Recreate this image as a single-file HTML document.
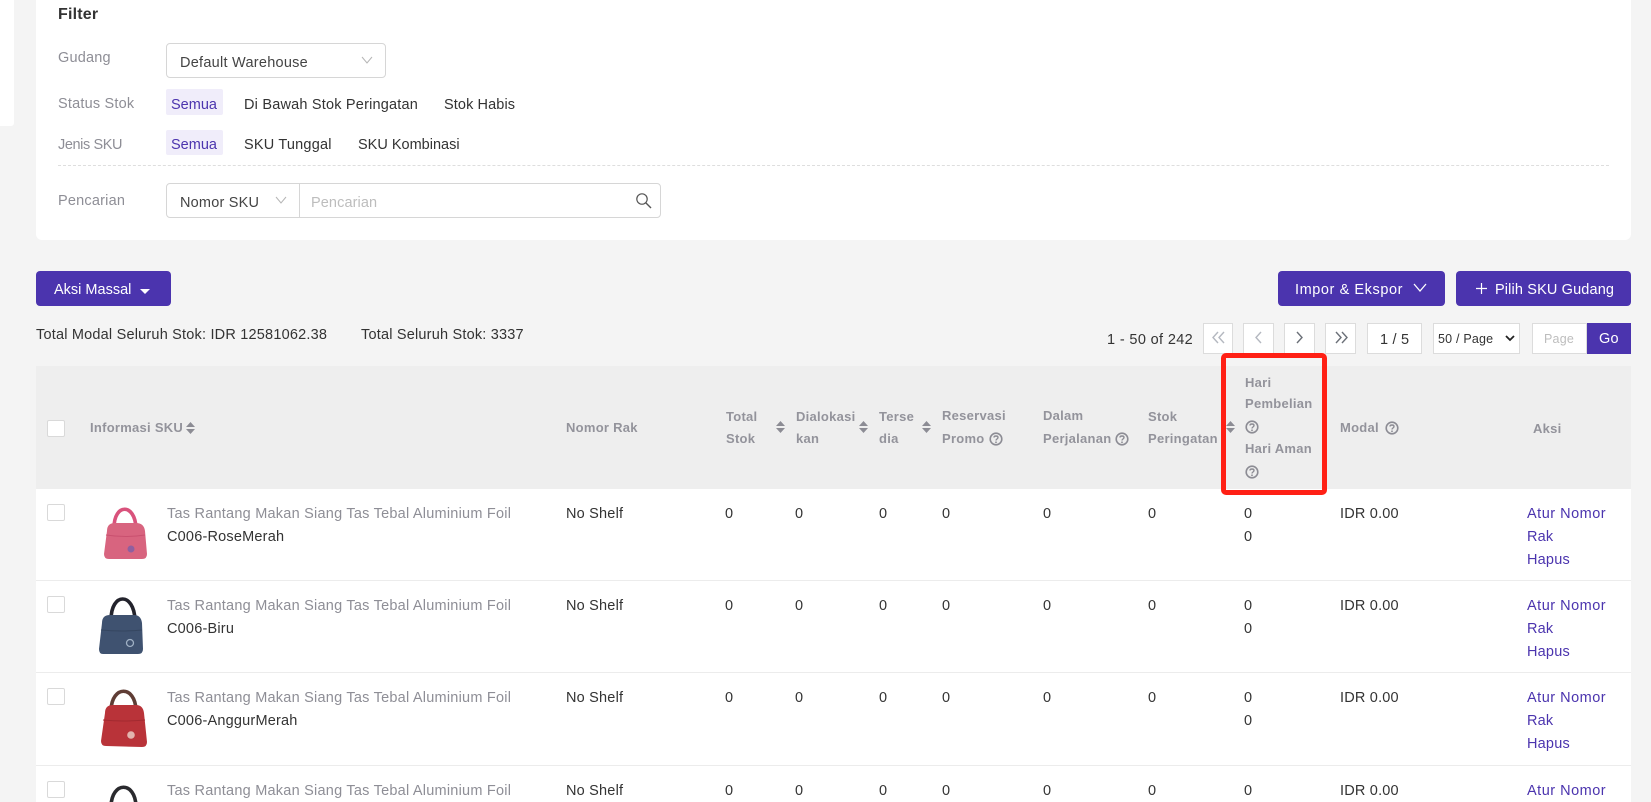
<!DOCTYPE html>
<html lang="id">
<head>
<meta charset="utf-8">
<title>Stok</title>
<style>
html,body{margin:0;padding:0;width:1651px;height:802px;overflow:hidden;background:#f4f4f4}
body{position:relative;font-family:"Liberation Sans",Arial,sans-serif;font-size:14.5px;color:#333;letter-spacing:.2px}
.a{position:absolute;box-sizing:border-box}
.t{position:absolute;white-space:nowrap;line-height:20px;height:20px;margin-top:1px}
.g{color:#8e8e96}
.h{color:#93939b;font-weight:bold;font-size:13px;letter-spacing:.27px;margin-top:0}
.s{font-size:12.500px;margin-top:0}
.p{color:#4b34ae}
.w{color:#fff}
.box{position:absolute;box-sizing:border-box;background:#fff;border:1px solid #dcdcdc}
.cb{position:absolute;box-sizing:border-box;width:18px;height:17px;background:#fff;border:1px solid #d9d9d9;border-radius:2px}
.btn{position:absolute;box-sizing:border-box;background:#4b34ae;border-radius:4px}
svg{position:absolute;display:block;overflow:visible}
</style>
</head>
<body>
<!-- sidebar -->
<div class="a" style="left:0;top:0;width:14px;height:126px;background:#fff;border-radius:0 0 3px 0"></div>
<!-- filter panel -->
<div class="a" style="left:36px;top:-10px;width:1595px;height:250px;background:#fff;border-radius:6px"></div>
<div class="t" style="left:58px;top:4px;font-size:16px;font-weight:bold;color:#333;letter-spacing:.2px">Filter</div>

<div class="t g" style="left:58px;top:47px">Gudang</div>
<div class="box" style="left:166px;top:43px;width:220px;height:35px;border-color:#d6d6d6;border-radius:4px"></div>
<div class="t" style="left:180px;top:52px;color:#444;letter-spacing:.26px">Default Warehouse</div>
<svg style="left:361px;top:56px" width="12" height="8" viewBox="0 0 12 8"><path d="M1 1l5 6 5-6" fill="none" stroke="#b5b5b5" stroke-width="1"/></svg>

<div class="t g" style="left:58px;top:93px">Status Stok</div>
<div class="a" style="left:166px;top:89px;width:57px;height:26px;background:#f0edfa;border-radius:2px"></div>
<div class="t p" style="left:171px;top:94px;letter-spacing:0">Semua</div>
<div class="t" style="left:244px;top:94px">Di Bawah Stok Peringatan</div>
<div class="t" style="left:444px;top:94px;letter-spacing:.1px">Stok Habis</div>

<div class="t g" style="left:58px;top:134px;letter-spacing:-.4px">Jenis SKU</div>
<div class="a" style="left:166px;top:130px;width:57px;height:25px;background:#f0edfa;border-radius:2px"></div>
<div class="t p" style="left:171px;top:134px;letter-spacing:0">Semua</div>
<div class="t" style="left:244px;top:134px">SKU Tunggal</div>
<div class="t" style="left:358px;top:134px;letter-spacing:0">SKU Kombinasi</div>

<div class="a" style="left:58px;top:165px;width:1551px;height:0;border-top:1px dashed #dedede"></div>

<div class="t g" style="left:58px;top:190px">Pencarian</div>
<div class="box" style="left:166px;top:183px;width:495px;height:35px;border-color:#d6d6d6;border-radius:4px"></div>
<div class="a" style="left:299px;top:183px;width:1px;height:35px;background:#d6d6d6"></div>
<div class="t" style="left:180px;top:192px;color:#444">Nomor SKU</div>
<svg style="left:275px;top:196px" width="12" height="8" viewBox="0 0 12 8"><path d="M1 1l5 6 5-6" fill="none" stroke="#b5b5b5" stroke-width="1"/></svg>
<div class="t" style="left:311px;top:192px;color:#bdbdbd;letter-spacing:.1px">Pencarian</div>
<svg style="left:635px;top:192px" width="17" height="17" viewBox="0 0 17 17"><circle cx="7" cy="7" r="5.2" fill="none" stroke="#555" stroke-width="1.2"/><path d="M11 11l5 5" stroke="#555" stroke-width="1.4"/></svg>

<!-- actions -->
<div class="btn" style="left:36px;top:271px;width:135px;height:35px"></div>
<div class="t w" style="left:54px;top:279px;letter-spacing:0">Aksi Massal</div>
<svg style="left:140px;top:289px" width="10" height="5" viewBox="0 0 10 5"><path d="M0 0h10L5 5z" fill="#fff"/></svg>

<div class="btn" style="left:1278px;top:271px;width:167px;height:35px"></div>
<div class="t w" style="left:1295px;top:279px;letter-spacing:.58px">Impor &amp; Ekspor</div>
<svg style="left:1413px;top:283px" width="14" height="10" viewBox="0 0 14 10"><path d="M1 1l6 7 6-7" fill="none" stroke="#fff" stroke-width="1.3"/></svg>
<div class="btn" style="left:1456px;top:271px;width:175px;height:35px"></div>
<svg style="left:1476px;top:283px" width="11" height="11" viewBox="0 0 11 11"><path d="M5.500 0v11M0 5.500h11" stroke="#fff" stroke-width="1.2"/></svg>
<div class="t w" style="left:1495px;top:279px;letter-spacing:.14px">Pilih SKU Gudang</div>

<div class="t" style="left:36px;top:324px">Total Modal Seluruh Stok: IDR 12581062.38</div>
<div class="t" style="left:361px;top:324px">Total Seluruh Stok: 3337</div>

<!-- pagination -->
<div class="t" style="left:1107px;top:329px;letter-spacing:.36px">1 - 50 of 242</div>
<div class="box" style="left:1203px;top:323px;width:30px;height:31px"></div>
<svg style="left:1211px;top:331px" width="15" height="13" viewBox="0 0 15 13"><path d="M7 1L2 6.500 7 12M13 1L8 6.500 13 12" fill="none" stroke="#b4b8c0" stroke-width="1.4"/></svg>
<div class="box" style="left:1243px;top:323px;width:31px;height:31px"></div>
<svg style="left:1254px;top:331px" width="9" height="13" viewBox="0 0 9 13"><path d="M7 1L2 6.500 7 12" fill="none" stroke="#b4b8c0" stroke-width="1.4"/></svg>
<div class="box" style="left:1284px;top:323px;width:31px;height:31px"></div>
<svg style="left:1295px;top:331px" width="9" height="13" viewBox="0 0 9 13"><path d="M2 1l5 5.500L2 12" fill="none" stroke="#6b7078" stroke-width="1.4"/></svg>
<div class="box" style="left:1325px;top:323px;width:31px;height:31px"></div>
<svg style="left:1334px;top:331px" width="15" height="13" viewBox="0 0 15 13"><path d="M2 1l5 5.500L2 12M8 1l5 5.500L8 12" fill="none" stroke="#6b7078" stroke-width="1.4"/></svg>
<div class="box" style="left:1367px;top:323px;width:55px;height:31px"></div>
<div class="t" style="left:1380px;top:329px">1 / 5</div>
<div class="box" style="left:1433px;top:323px;width:87px;height:31px"></div>
<div class="t s" style="left:1438px;top:329px;letter-spacing:.2px">50 / Page</div>
<svg style="left:1505px;top:335px" width="10" height="7" viewBox="0 0 10 7"><path d="M1 1l4 4 4-4" fill="none" stroke="#222" stroke-width="1.800"/></svg>
<div class="box" style="left:1532px;top:323px;width:55px;height:31px"></div>
<div class="t s" style="left:1544px;top:329px;letter-spacing:.2px;color:#bdbdbd">Page</div>
<div class="a" style="left:1587px;top:323px;width:44px;height:31px;background:#4b34ae"></div>
<div class="t w" style="left:1599px;top:328px">Go</div>

<!-- table -->
<div class="a" style="left:36px;top:366px;width:1595px;height:123px;background:#eee"></div>
<div class="a" style="left:36px;top:489px;width:1595px;height:313px;background:#fff"></div>
<div class="a" style="left:36px;top:580px;width:1595px;height:1px;background:#ececec"></div>
<div class="a" style="left:36px;top:672px;width:1595px;height:1px;background:#ececec"></div>
<div class="a" style="left:36px;top:765px;width:1595px;height:1px;background:#ececec"></div>

<div class="cb" style="left:47px;top:420px"></div>
<div class="t h" style="left:90px;top:418px">Informasi SKU</div>
<svg style="left:186px;top:422px" width="9" height="12" viewBox="0 0 9 12"><path d="M4.500 0L9 5H0zM0 7h9l-4.500 5z" fill="#8c8c94"/></svg>
<div class="t h" style="left:566px;top:418px">Nomor Rak</div>
<div class="t h" style="left:726px;top:407px">Total</div>
<div class="t h" style="left:726px;top:429px">Stok</div>
<svg style="left:776px;top:421px" width="9" height="12" viewBox="0 0 9 12"><path d="M4.500 0L9 5H0zM0 7h9l-4.500 5z" fill="#8c8c94"/></svg>
<div class="t h" style="left:796px;top:407px">Dialokasi</div>
<div class="t h" style="left:796px;top:429px">kan</div>
<svg style="left:859px;top:421px" width="9" height="12" viewBox="0 0 9 12"><path d="M4.500 0L9 5H0zM0 7h9l-4.500 5z" fill="#8c8c94"/></svg>
<div class="t h" style="left:879px;top:407px">Terse</div>
<div class="t h" style="left:879px;top:429px">dia</div>
<svg style="left:922px;top:421px" width="9" height="12" viewBox="0 0 9 12"><path d="M4.500 0L9 5H0zM0 7h9l-4.500 5z" fill="#8c8c94"/></svg>
<div class="t h" style="left:942px;top:406px">Reservasi</div>
<div class="t h" style="left:942px;top:429px">Promo</div>
<svg style="left:989px;top:432px" width="14" height="14" viewBox="0 0 14 14"><circle cx="7" cy="7" r="5.800" fill="none" stroke="#8c8c94" stroke-width="1.600"/><path d="M5 5.500C5 3.500 9 3.500 9 5.500 9 7 7 7 7 8.500" fill="none" stroke="#8c8c94" stroke-width="1.400"/><circle cx="7" cy="10.300" r=".9" fill="#8c8c94"/></svg>
<div class="t h" style="left:1043px;top:406px">Dalam</div>
<div class="t h" style="left:1043px;top:429px">Perjalanan</div>
<svg style="left:1115px;top:432px" width="14" height="14" viewBox="0 0 14 14"><circle cx="7" cy="7" r="5.800" fill="none" stroke="#8c8c94" stroke-width="1.600"/><path d="M5 5.500C5 3.500 9 3.500 9 5.500 9 7 7 7 7 8.500" fill="none" stroke="#8c8c94" stroke-width="1.400"/><circle cx="7" cy="10.300" r=".9" fill="#8c8c94"/></svg>
<div class="t h" style="left:1148px;top:407px">Stok</div>
<div class="t h" style="left:1148px;top:429px">Peringatan</div>
<svg style="left:1226px;top:421px" width="9" height="12" viewBox="0 0 9 12"><path d="M4.500 0L9 5H0zM0 7h9l-4.500 5z" fill="#8c8c94"/></svg>
<div class="t h" style="left:1245px;top:373px">Hari</div>
<div class="t h" style="left:1245px;top:394px">Pembelian</div>
<svg style="left:1245px;top:420px" width="14" height="14" viewBox="0 0 14 14"><circle cx="7" cy="7" r="5.800" fill="none" stroke="#8c8c94" stroke-width="1.600"/><path d="M5 5.500C5 3.500 9 3.500 9 5.500 9 7 7 7 7 8.500" fill="none" stroke="#8c8c94" stroke-width="1.400"/><circle cx="7" cy="10.300" r=".9" fill="#8c8c94"/></svg>
<div class="t h" style="left:1245px;top:439px">Hari Aman</div>
<svg style="left:1245px;top:465px" width="14" height="14" viewBox="0 0 14 14"><circle cx="7" cy="7" r="5.800" fill="none" stroke="#8c8c94" stroke-width="1.600"/><path d="M5 5.500C5 3.500 9 3.500 9 5.500 9 7 7 7 7 8.500" fill="none" stroke="#8c8c94" stroke-width="1.400"/><circle cx="7" cy="10.300" r=".9" fill="#8c8c94"/></svg>
<div class="t h" style="left:1340px;top:418px">Modal</div>
<svg style="left:1385px;top:421px" width="14" height="14" viewBox="0 0 14 14"><circle cx="7" cy="7" r="5.800" fill="none" stroke="#8c8c94" stroke-width="1.600"/><path d="M5 5.500C5 3.500 9 3.500 9 5.500 9 7 7 7 7 8.500" fill="none" stroke="#8c8c94" stroke-width="1.400"/><circle cx="7" cy="10.300" r=".9" fill="#8c8c94"/></svg>
<div class="t h" style="left:1533px;top:419px">Aksi</div>

<!-- red annotation -->
<div class="a" style="left:1221px;top:353px;width:106px;height:142px;border:5.500px solid #ff2015;border-radius:5px"></div>

<!-- row 1 -->
<div class="cb" style="left:47px;top:504px"></div>
<svg style="left:100px;top:504px" width="50" height="58" viewBox="0 0 50 58"><path d="M14 24C14 -1 35 -1 36 24" fill="none" stroke="#d9527c" stroke-width="3.600"/><path d="M7 27Q7 19 15 19H36Q44 19 45 27L47 50Q47 55 42 55H9Q4 55 4 50z" fill="#d8647f"/><path d="M6 31Q26 34 45 31" fill="none" stroke="#c9506f" stroke-width="1"/><circle cx="31" cy="45" r="3.500" fill="#8f5f9f"/></svg>
<div class="t g" style="left:167px;top:503px;letter-spacing:.23px">Tas Rantang Makan Siang Tas Tebal Aluminium Foil</div>
<div class="t" style="left:167px;top:526px">C006-RoseMerah</div>
<div class="t" style="left:566px;top:503px">No Shelf</div>
<div class="t" style="left:725px;top:503px">0</div>
<div class="t" style="left:795px;top:503px">0</div>
<div class="t" style="left:879px;top:503px">0</div>
<div class="t" style="left:942px;top:503px">0</div>
<div class="t" style="left:1043px;top:503px">0</div>
<div class="t" style="left:1148px;top:503px">0</div>
<div class="t" style="left:1244px;top:503px">0</div>
<div class="t" style="left:1244px;top:526px">0</div>
<div class="t" style="left:1340px;top:503px">IDR 0.00</div>
<div class="t p" style="left:1527px;top:503px;letter-spacing:.5px">Atur Nomor</div>
<div class="t p" style="left:1527px;top:526px">Rak</div>
<div class="t p" style="left:1527px;top:549px">Hapus</div>

<!-- row 2 -->
<div class="cb" style="left:47px;top:596px"></div>
<svg style="left:96px;top:594px" width="50" height="62" viewBox="0 0 50 62"><path d="M15 26C15 -2 38 -2 39 26" fill="none" stroke="#23232c" stroke-width="3.600"/><path d="M6 29Q6 21 14 21H38Q45 21 46 29L47 55Q47 60 42 60H7Q3 60 3 55z" fill="#3f5270"/><path d="M5 36Q26 38 46 36" fill="none" stroke="#354660" stroke-width="1"/><circle cx="34" cy="49" r="3.500" fill="none" stroke="#9fb0c4" stroke-width="1.300"/></svg>
<div class="t g" style="left:167px;top:595px;letter-spacing:.23px">Tas Rantang Makan Siang Tas Tebal Aluminium Foil</div>
<div class="t" style="left:167px;top:618px">C006-Biru</div>
<div class="t" style="left:566px;top:595px">No Shelf</div>
<div class="t" style="left:725px;top:595px">0</div>
<div class="t" style="left:795px;top:595px">0</div>
<div class="t" style="left:879px;top:595px">0</div>
<div class="t" style="left:942px;top:595px">0</div>
<div class="t" style="left:1043px;top:595px">0</div>
<div class="t" style="left:1148px;top:595px">0</div>
<div class="t" style="left:1244px;top:595px">0</div>
<div class="t" style="left:1244px;top:618px">0</div>
<div class="t" style="left:1340px;top:595px">IDR 0.00</div>
<div class="t p" style="left:1527px;top:595px;letter-spacing:.5px">Atur Nomor</div>
<div class="t p" style="left:1527px;top:618px">Rak</div>
<div class="t p" style="left:1527px;top:641px">Hapus</div>

<!-- row 3 -->
<div class="cb" style="left:47px;top:688px"></div>
<svg style="left:98px;top:686px" width="50" height="64" viewBox="0 0 50 64"><path d="M13 24C14 -1 37 -1 38 24" fill="none" stroke="#5f3d35" stroke-width="3.600"/><path d="M7 27Q7 19 15 19H38Q45 19 46 27L49 56Q49 61 44 61L8 60Q3 60 3 55z" fill="#b93339"/><path d="M5 34Q26 36 47 34" fill="none" stroke="#a22a30" stroke-width="1"/><circle cx="33" cy="49" r="3.800" fill="#e2b4ae"/></svg>
<div class="t g" style="left:167px;top:687px;letter-spacing:.23px">Tas Rantang Makan Siang Tas Tebal Aluminium Foil</div>
<div class="t" style="left:167px;top:710px">C006-AnggurMerah</div>
<div class="t" style="left:566px;top:687px">No Shelf</div>
<div class="t" style="left:725px;top:687px">0</div>
<div class="t" style="left:795px;top:687px">0</div>
<div class="t" style="left:879px;top:687px">0</div>
<div class="t" style="left:942px;top:687px">0</div>
<div class="t" style="left:1043px;top:687px">0</div>
<div class="t" style="left:1148px;top:687px">0</div>
<div class="t" style="left:1244px;top:687px">0</div>
<div class="t" style="left:1244px;top:710px">0</div>
<div class="t" style="left:1340px;top:687px">IDR 0.00</div>
<div class="t p" style="left:1527px;top:687px;letter-spacing:.5px">Atur Nomor</div>
<div class="t p" style="left:1527px;top:710px">Rak</div>
<div class="t p" style="left:1527px;top:733px">Hapus</div>

<!-- row 4 -->
<div class="cb" style="left:47px;top:781px"></div>
<svg style="left:98px;top:782px" width="50" height="20" viewBox="0 0 50 20"><path d="M13 24C14 -1 37 -1 38 24" fill="none" stroke="#2a2a2e" stroke-width="3.600"/></svg>
<div class="t g" style="left:167px;top:780px;letter-spacing:.23px">Tas Rantang Makan Siang Tas Tebal Aluminium Foil</div>
<div class="t" style="left:566px;top:780px">No Shelf</div>
<div class="t" style="left:725px;top:780px">0</div>
<div class="t" style="left:795px;top:780px">0</div>
<div class="t" style="left:879px;top:780px">0</div>
<div class="t" style="left:942px;top:780px">0</div>
<div class="t" style="left:1043px;top:780px">0</div>
<div class="t" style="left:1148px;top:780px">0</div>
<div class="t" style="left:1244px;top:780px">0</div>
<div class="t" style="left:1340px;top:780px">IDR 0.00</div>
<div class="t p" style="left:1527px;top:780px;letter-spacing:.5px">Atur Nomor</div>
</body>
</html>
